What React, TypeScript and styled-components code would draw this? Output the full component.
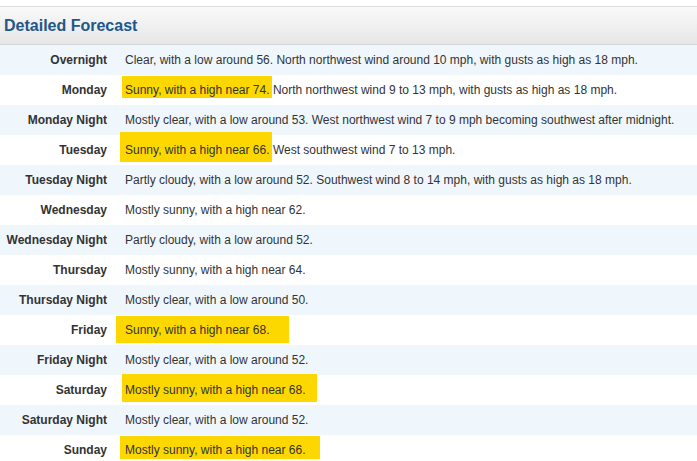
import React from "react";
import styled, { createGlobalStyle } from "styled-components";

const Global = createGlobalStyle`
  html, body { margin: 0; padding: 0; background: #fff; }
  body { padding-top: 6px; font-family: Arial, "Liberation Sans", Helvetica, sans-serif; }
`;

const Panel = styled.section`
  width: 100%;
  border-top: 1px solid #dcdcdc;
`;

const Header = styled.div`
  height: 37px;
  display: flex;
  align-items: center;
  padding-left: 4px;
  background: linear-gradient(to bottom, #f9f9f9 0%, #e7e7e7 100%);
  border-bottom: 1px solid #d6d6d6;
`;

const Title = styled.h2`
  margin: 0;
  font-size: 16px;
  font-weight: bold;
  color: #21578a;
`;

const Row = styled.div<{ $alt: boolean }>`
  display: grid;
  grid-template-columns: 107px 1fr;
  column-gap: 18px;
  align-items: center;
  height: 30px;
  background: ${(p) => (p.$alt ? "#eff7fd" : "#ffffff")};
  font-size: 12px;
  color: #333;
`;

const Label = styled.div`
  text-align: right;
  font-weight: bold;
  white-space: nowrap;
`;

const Text = styled.div`
  white-space: nowrap;
`;

type Box = { l: number; r: number; t: number; b: number };

const Mark = styled.span<{ $box: Box }>`
  position: relative;
  z-index: 0;
  &::before {
    content: "";
    position: absolute;
    z-index: -1;
    left: ${(p) => -p.$box.l}px;
    right: ${(p) => -p.$box.r}px;
    top: ${(p) => -p.$box.t}px;
    bottom: ${(p) => -p.$box.b}px;
    background: #fdd700;
  }
`;

type Item = { day: string; mark?: string; rest?: string; box?: Box };

const items: Item[] = [
  { day: "Overnight", rest: "Clear, with a low around 56. North northwest wind around 10 mph, with gusts as high as 18 mph." },
  { day: "Monday", mark: "Sunny, with a high near 74.", rest: " North northwest wind 9 to 13 mph, with gusts as high as 18 mph.", box: { l: 3, r: 2, t: 7, b: 1 } },
  { day: "Monday Night", rest: "Mostly clear, with a low around 53. West northwest wind 7 to 9 mph becoming southwest after midnight." },
  { day: "Tuesday", mark: "Sunny, with a high near 66.", rest: " West southwest wind 7 to 13 mph.", box: { l: 5, r: 2, t: 11, b: 5 } },
  { day: "Tuesday Night", rest: "Partly cloudy, with a low around 52. Southwest wind 8 to 14 mph, with gusts as high as 18 mph." },
  { day: "Wednesday", rest: "Mostly sunny, with a high near 62." },
  { day: "Wednesday Night", rest: "Partly cloudy, with a low around 52." },
  { day: "Thursday", rest: "Mostly sunny, with a high near 64." },
  { day: "Thursday Night", rest: "Mostly clear, with a low around 50." },
  { day: "Friday", mark: "Sunny, with a high near 68.", box: { l: 9, r: 19, t: 7, b: 6 } },
  { day: "Friday Night", rest: "Mostly clear, with a low around 52." },
  { day: "Saturday", mark: "Mostly sunny, with a high near 68.", box: { l: 3, r: 11, t: 9, b: 5 } },
  { day: "Saturday Night", rest: "Mostly clear, with a low around 52." },
  { day: "Sunday", mark: "Mostly sunny, with a high near 66.", box: { l: 5, r: 14, t: 7, b: 2 } },
];

export default function App() {
  return (
    <>
      <Global />
      <Panel>
        <Header>
          <Title>Detailed Forecast</Title>
        </Header>
        {items.map((it, i) => (
          <Row key={it.day} $alt={i % 2 === 0}>
            <Label>{it.day}</Label>
            <Text>
              {it.mark && it.box ? <Mark $box={it.box}>{it.mark}</Mark> : null}
              {it.rest}
            </Text>
          </Row>
        ))}
      </Panel>
    </>
  );
}
